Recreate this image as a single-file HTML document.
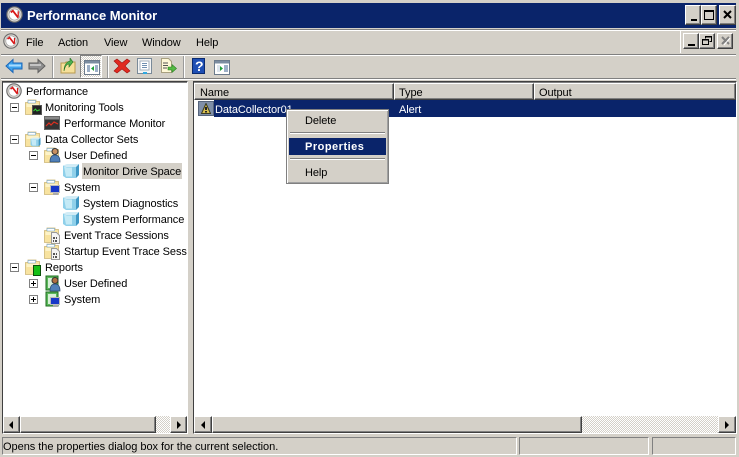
<!DOCTYPE html>
<html><head><meta charset="utf-8"><style>
html,body{margin:0;padding:0;background:#d4d0c8;}
#w{position:relative;width:739px;height:457px;overflow:hidden;background:#d4d0c8;font:11px/16px "Liberation Sans",sans-serif;color:#000;letter-spacing:-.08px;}
#w div,#w span,#w svg{position:absolute;}
.t{white-space:nowrap;margin-top:1px;}
.b{box-sizing:border-box;background:#d4d0c8;border:1px solid;border-color:#fff #404040 #404040 #fff;box-shadow:inset -1px -1px 0 #808080;}
.ex{width:9px;height:9px;box-sizing:border-box;border:1px solid #808080;background:#fff;}
.ex:before{content:"";position:absolute;left:1px;top:3px;width:5px;height:1px;background:#000;}
.ex.p:after{content:"";position:absolute;left:3px;top:1px;width:1px;height:5px;background:#000;}
.dith{background-color:#fff;background-image:conic-gradient(#d4d0c8 25%,#fff 0 50%,#d4d0c8 0 75%,#fff 0);background-size:2px 2px;}
</style></head><body><div id="w">
<svg width="0" height="0" style="left:0;top:0">
<defs>
<symbol id="pf" viewBox="0 0 16 16"><circle cx="8" cy="8" r="7.2" fill="#dcd8d2" stroke="#6a6a6a" stroke-width="1.1"/><circle cx="8" cy="8" r="5.200" fill="#fff" stroke="#999" stroke-width=".6"/><path d="M4.500 6l2-1.500 5 6.500" fill="none" stroke="#d81818" stroke-width="1.700"/><path d="M11.500 5v5" stroke="#d81818" stroke-width="1.200"/></symbol>
<symbol id="fd" viewBox="0 0 16 16"><path d="M3 1h8v1.500h3.500V15.500H.5V3.500H3z" fill="#f8e3a0" stroke="#cdb676" stroke-width=".8"/><path d="M3 1.500h7.500V4H3z" fill="#fff" stroke="#5ea0d8" stroke-width=".5"/><path d="M1.500 5h12v3h-12z" fill="#fdf3c8"/></symbol>
<symbol id="cu" viewBox="0 0 16 16"><path d="M0 2.500l4-1.500h12l-3 3H2z" fill="#d2ecf6"/><path d="M0 2.500l3 1.500h10v11H3l-3-2z" fill="#8fd0ea"/><path d="M1 3.500l3 1h5v9H3z" fill="#c4eaf6"/><path d="M13 4l3-3v11l-3 3z" fill="#3f97c4"/></symbol>
<symbol id="log" viewBox="0 0 9 12"><path d="M.5.5h5l3 3v8h-8z" fill="#f4f4f4" stroke="#999"/><path d="M2 5h2v2H2zM5 5h1v2H5zM2 8h1v2H2zM4 8h2v2H4z" fill="#555"/></symbol>
<symbol id="bk" viewBox="0 0 16 16"><path d="M2 1h12v14H2z" fill="#5cb85c" stroke="#1e6e1e"/><path d="M4 3h8v10H4z" fill="#d8f0d8"/></symbol>
</defs></svg>

<!-- title bar -->
<div style="left:1px;top:3px;width:735px;height:25px;background:#0a246a"></div>
<svg style="left:6px;top:6px" width="17" height="17"><use href="#pf"/></svg>
<div class="t" style="left:27px;top:6px;color:#fff;font:bold 13px/17px 'Liberation Sans',sans-serif;letter-spacing:-.03px">Performance Monitor</div>
<div class="b" style="left:685px;top:5px;width:16px;height:20px"><span style="left:5px;top:13px;width:6px;height:2px;background:#000"></span></div>
<div class="b" style="left:701px;top:5px;width:16px;height:20px"><span style="left:2px;top:4px;border:1px solid #000;border-top-width:2px;width:8px;height:7px"></span></div>
<div class="b" style="left:719px;top:5px;width:17px;height:20px"><svg style="left:3px;top:4px" width="9" height="9"><path d="M1 1l7 7M8 1L1 8" stroke="#000" stroke-width="2"/></svg></div>

<!-- menu bar -->
<div style="left:1px;top:29px;width:735px;height:24px;border-top:1px solid #808080;border-bottom:1px solid #808080;box-shadow:inset 0 1px 0 #fff,0 1px 0 #fff"></div>
<div style="left:680px;top:30px;width:1px;height:23px;background:#fff"></div>
<svg style="left:3px;top:33px" width="16" height="16"><use href="#pf"/></svg>
<div class="t" style="left:26px;top:34px">File</div>
<div class="t" style="left:58px;top:34px">Action</div>
<div class="t" style="left:104px;top:34px">View</div>
<div class="t" style="left:142px;top:34px">Window</div>
<div class="t" style="left:196px;top:34px">Help</div>
<div class="b" style="left:683px;top:33px;width:16px;height:16px"><span style="left:4px;top:10px;width:7px;height:2px;background:#000"></span></div>
<div class="b" style="left:699px;top:33px;width:16px;height:16px"><svg style="left:2px;top:2px" width="11" height="10"><path d="M3.500 2.500V.5h6v5h-2M.5 3.500h6v5h-6z" fill="none" stroke="#000"/><path d="M3 1h7M0 4h7" stroke="#000"/></svg></div>
<div class="b" style="left:717px;top:33px;width:16px;height:16px"><svg style="left:3px;top:2px" width="10" height="10"><path d="M1 1l7 7M8 1L1 8" stroke="#808080" stroke-width="2"/><path d="M9 2L3 9" stroke="#fff"/></svg></div>

<!-- toolbar -->
<div style="left:1px;top:54px;width:735px;height:24px;border-bottom:1px solid #808080;box-shadow:0 1px 0 #fff"></div>
<svg style="left:5px;top:58px" width="18" height="16"><path d="M1 8l7-6.500V5h9v6H8v3.500z" fill="#3ea2ec" stroke="#1b66b8"/><path d="M4 7.500h12" stroke="#a8dcff" stroke-width="2"/></svg>
<svg style="left:28px;top:58px" width="18" height="16"><path d="M17 8l-7-6.500V5H1v6h9v3.500z" fill="#8f8f8f" stroke="#606060"/><path d="M2 7h11" stroke="#c4c4c4" stroke-width="2"/></svg>
<div style="left:52px;top:56px;width:1px;height:22px;background:#9a9a9a;box-shadow:1px 0 0 #fff"></div>
<svg style="left:60px;top:58px" width="16" height="16"><path d="M1 5h4l1-1h9v11H1z" fill="#f6e09a" stroke="#b89a50"/><path d="M4 13c1-5 3-7 5-7V9l4-5-3-4v3C6 4 4 8 4 13z" fill="#4fb04f" stroke="#207020" stroke-width=".6"/></svg>
<div class="dith" style="left:80px;top:55px;width:22px;height:23px;box-sizing:border-box;border:1px solid;border-color:#808080 #fff #fff #808080"></div>
<svg style="left:84px;top:60px" width="16" height="15"><rect x=".5" y=".5" width="15" height="14" fill="#fff" stroke="#6c7b8c"/><rect x="1" y="1" width="14" height="2.500" fill="#7b8ca0"/><rect x="3" y="5" width="3" height="7" fill="#9db0c8"/><rect x="11" y="5" width="3" height="7" fill="#9db0c8"/><path d="M10 6v5L7 8.500z" fill="#1fa03a"/></svg>
<div style="left:107px;top:56px;width:1px;height:22px;background:#9a9a9a;box-shadow:1px 0 0 #fff"></div>
<svg style="left:113px;top:58px" width="18" height="16"><path d="M1 3l3-2 5 4 5-4 3 2-5 5 5 5-3 2-5-4-5 4-3-2 5-5z" fill="#e02a20" stroke="#a01010" stroke-width=".6"/></svg>
<svg style="left:137px;top:58px" width="16" height="16"><rect x=".5" y=".5" width="14" height="15" fill="#f4f4f4" stroke="#7a8a99"/><rect x="3" y="3" width="9" height="9" fill="#fff" stroke="#a4b0bc"/><path d="M5 5.500h5M5 7.500h5M5 9.500h5" stroke="#6f8fb0"/><rect x="6" y="14" width="4" height="2" fill="#30a8e0"/></svg>
<svg style="left:160px;top:58px" width="17" height="16"><path d="M1.500.5h7l3 3v11h-10z" fill="#fff8d8" stroke="#a8a080"/><path d="M3 5h5M3 7.500h5M3 10h4" stroke="#555"/><path d="M8 9h4V6.500L16.500 10.500 12 14.500V12H8z" fill="#55bb44" stroke="#2a8020" stroke-width=".6"/></svg>
<div style="left:183px;top:56px;width:1px;height:22px;background:#9a9a9a;box-shadow:1px 0 0 #fff"></div>
<div style="left:192px;top:58px;width:13px;height:16px;background:#1f4fb4;border:1px solid #0a2a70;box-sizing:border-box"></div>
<div class="t" style="left:195px;top:57px;color:#fff;font:bold 14px/16px 'Liberation Sans',sans-serif;letter-spacing:0">?</div>
<svg style="left:214px;top:60px" width="16" height="15"><rect x=".5" y=".5" width="15" height="14" fill="#fff" stroke="#6c7b8c"/><rect x="1" y="1" width="14" height="2.500" fill="#7b8ca0"/><rect x="3" y="5" width="3" height="7" fill="#dde5ee"/><rect x="10" y="5" width="4" height="7" fill="#9db0c8"/><path d="M6 6v5l3-2.500z" fill="#1fa03a"/></svg>

<!-- left pane -->
<div style="left:2px;top:81px;width:186px;height:353px;box-sizing:border-box;border:1px solid;border-color:#404040 #fff #fff #404040;background:#fff"></div>
<div style="left:3px;top:82px;width:184px;height:1px;background:#808080"></div>
<svg style="left:6px;top:83px" width="16" height="16"><use href="#pf"/></svg>
<div class="t" style="left:26px;top:83px">Performance</div>

<div class="ex" style="left:10px;top:103px"></div>
<svg style="left:25px;top:99px" width="16" height="16"><use href="#fd"/></svg>
<svg style="left:32px;top:105px" width="10" height="10"><rect x=".5" y=".5" width="9" height="9" fill="#222" stroke="#555"/><path d="M1.500 6l2-2 1.500 2 2-1h1" stroke="#35d035" fill="none"/></svg>
<div class="t" style="left:45px;top:99px">Monitoring Tools</div>

<svg style="left:44px;top:116px" width="16" height="14"><rect x=".5" y=".5" width="15" height="13" fill="#333" stroke="#666"/><rect x="1" y="1" width="14" height="2.500" fill="#888"/><path d="M2 10l3-3 2 2 3-3 4 2" stroke="#e03020" stroke-width="1.200" fill="none"/></svg>
<div class="t" style="left:64px;top:115px">Performance Monitor</div>

<div class="ex" style="left:10px;top:135px"></div>
<svg style="left:25px;top:131px" width="16" height="16"><use href="#fd"/></svg>
<svg style="left:30px;top:137px" width="11" height="10"><use href="#cu"/></svg>
<div class="t" style="left:45px;top:131px">Data Collector Sets</div>

<div class="ex" style="left:29px;top:151px"></div>
<svg style="left:44px;top:147px" width="16" height="16"><use href="#fd"/></svg>
<svg style="left:49px;top:147px" width="12" height="16"><circle cx="6" cy="4.500" r="3" fill="#c89060" stroke="#333"/><path d="M1 15c0-5 2-7 5-7s5 2 5 7z" fill="#5080b8" stroke="#284870" stroke-width=".7"/></svg>
<div class="t" style="left:64px;top:147px">User Defined</div>

<svg style="left:63px;top:163px" width="16" height="16"><use href="#cu"/></svg>
<div style="left:82px;top:163px;width:100px;height:16px;background:#d4d0c8"></div>
<div class="t" style="left:83px;top:163px">Monitor Drive Space</div>

<div class="ex" style="left:29px;top:183px"></div>
<svg style="left:44px;top:179px" width="16" height="16"><use href="#fd"/></svg>
<svg style="left:50px;top:185px" width="11" height="11"><rect x=".5" y=".5" width="9" height="7" fill="#1838c8" stroke="#bbb"/><rect x="3" y="8" width="5" height="2" fill="#aaa"/></svg>
<div class="t" style="left:64px;top:179px">System</div>

<svg style="left:63px;top:195px" width="16" height="16"><use href="#cu"/></svg>
<div class="t" style="left:83px;top:195px">System Diagnostics</div>
<svg style="left:63px;top:211px" width="16" height="16"><use href="#cu"/></svg>
<div class="t" style="left:83px;top:211px">System Performance</div>

<svg style="left:44px;top:227px" width="16" height="16"><use href="#fd"/></svg>
<svg style="left:51px;top:232px" width="9" height="12"><use href="#log"/></svg>
<div class="t" style="left:64px;top:227px">Event Trace Sessions</div>
<svg style="left:44px;top:243px" width="16" height="16"><use href="#fd"/></svg>
<svg style="left:51px;top:248px" width="9" height="12"><use href="#log"/></svg>
<div style="left:64px;top:243px;width:123px;height:18px;overflow:hidden"><span class="t" style="left:0;top:0">Startup Event Trace Sessions</span></div>

<div class="ex" style="left:10px;top:263px"></div>
<svg style="left:25px;top:259px" width="16" height="16"><use href="#fd"/></svg>
<div style="left:33px;top:265px;width:8px;height:11px;background:#16c016;border:1px solid #0a500a;box-sizing:border-box"></div>
<div class="t" style="left:45px;top:259px">Reports</div>

<div class="ex p" style="left:29px;top:279px"></div>
<svg style="left:44px;top:275px" width="16" height="16"><use href="#bk"/></svg>
<svg style="left:49px;top:276px" width="12" height="16"><circle cx="6" cy="4.500" r="3" fill="#b07040" stroke="#333"/><path d="M1 15c0-5 2-7 5-7s5 2 5 7z" fill="#5080b8" stroke="#284870" stroke-width=".7"/></svg>
<div class="t" style="left:64px;top:275px">User Defined</div>

<div class="ex p" style="left:29px;top:295px"></div>
<svg style="left:44px;top:291px" width="16" height="16"><use href="#bk"/></svg>
<svg style="left:50px;top:297px" width="11" height="11"><rect x=".5" y=".5" width="9" height="7" fill="#1838c8" stroke="#bbb"/><rect x="3" y="8" width="5" height="2" fill="#aaa"/></svg>
<div class="t" style="left:64px;top:291px">System</div>

<!-- left scrollbar -->
<div class="dith" style="left:3px;top:416px;width:184px;height:17px"></div>
<div class="b" style="left:3px;top:416px;width:17px;height:17px"><span style="left:5px;top:4px;border:4px solid transparent;border-right-color:#000;border-left-width:0"></span></div>
<div class="b" style="left:20px;top:416px;width:136px;height:17px"></div>
<div class="b" style="left:170px;top:416px;width:17px;height:17px"><span style="left:6px;top:4px;border:4px solid transparent;border-left-color:#000;border-right-width:0"></span></div>

<!-- right pane -->
<div style="left:193px;top:81px;width:544px;height:353px;box-sizing:border-box;border:1px solid;border-color:#404040 #fff #fff #404040;background:#fff"></div>
<div style="left:194px;top:82px;width:542px;height:1px;background:#808080"></div>
<div class="b" style="left:194px;top:83px;width:200px;height:17px"></div>
<div class="b" style="left:394px;top:83px;width:140px;height:17px"></div>
<div class="b" style="left:534px;top:83px;width:202px;height:17px"></div>
<div class="t" style="left:200px;top:84px">Name</div>
<div class="t" style="left:399px;top:84px">Type</div>
<div class="t" style="left:539px;top:84px">Output</div>

<div style="left:214px;top:100px;width:522px;height:17px;background:#0a246a"></div>
<div style="left:198px;top:101px;width:16px;height:15px;background:#7f8fa8;border:1px solid #56647c;box-sizing:border-box"></div>
<svg style="left:201px;top:103px" width="10" height="11"><path d="M5 .5L9.500 10.500H.5z" fill="#d8c050" stroke="#3a3a20"/><rect x="4" y="4" width="2" height="3" fill="#222"/><rect x="4" y="8" width="2" height="1.500" fill="#222"/></svg>
<div class="t" style="left:215px;top:101px;color:#fff">DataCollector01</div>
<div class="t" style="left:399px;top:101px;color:#fff">Alert</div>

<!-- right scrollbar -->
<div class="dith" style="left:194px;top:416px;width:542px;height:17px"></div>
<div class="b" style="left:194px;top:416px;width:18px;height:17px"><span style="left:6px;top:4px;border:4px solid transparent;border-right-color:#000;border-left-width:0"></span></div>
<div class="b" style="left:212px;top:416px;width:370px;height:17px"></div>
<div class="b" style="left:718px;top:416px;width:18px;height:17px"><span style="left:6px;top:4px;border:4px solid transparent;border-left-color:#000;border-right-width:0"></span></div>

<!-- context menu -->
<div style="left:286px;top:109px;width:103px;height:75px;box-sizing:border-box;background:#d4d0c8;border:1px solid #808080;box-shadow:inset 1px 1px 0 #fff,inset -1px -1px 0 #a0a0a0"></div>
<div class="t" style="left:305px;top:112px">Delete</div>
<div style="left:290px;top:132px;width:95px;height:1px;background:#808080;box-shadow:0 1px 0 #fff"></div>
<div style="left:289px;top:138px;width:97px;height:17px;background:#0a246a"></div>
<div class="t" style="left:305px;top:138px;color:#fff;font-weight:bold;letter-spacing:.5px">Properties</div>
<div style="left:290px;top:158px;width:95px;height:1px;background:#808080;box-shadow:0 1px 0 #fff"></div>
<div class="t" style="left:305px;top:164px">Help</div>

<!-- status bar -->
<div style="left:2px;top:437px;width:515px;height:18px;box-sizing:border-box;border:1px solid;border-color:#808080 #fff #fff #808080"></div>
<div style="left:519px;top:437px;width:130px;height:18px;box-sizing:border-box;border:1px solid;border-color:#808080 #fff #fff #808080"></div>
<div style="left:652px;top:437px;width:84px;height:18px;box-sizing:border-box;border:1px solid;border-color:#808080 #fff #fff #808080"></div>
<div class="t" style="left:3px;top:438px;letter-spacing:-.03px">Opens the properties dialog box for the current selection.</div>
</div></body></html>
